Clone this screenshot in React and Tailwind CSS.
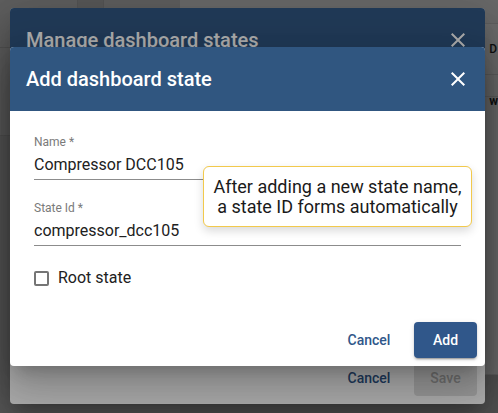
// Close icon (material style cross)
function CloseIcon({ className }) {
  return (
    <svg className={className} viewBox="0 0 24 24" fill="currentColor" width="24" height="24">
      <path d="M19 6.41L17.59 5 12 10.59 6.41 5 5 6.41 10.59 12 5 17.59 6.41 19 12 13.41 17.59 19 19 17.59 13.41 12z" />
    </svg>
  );
}

// Page behind the dialogs
function BackgroundPage() {
  return (
    <div className="absolute inset-0 flex bg-[#8c8c8c]">
      <div className="w-[180px] h-full flex flex-col">
        <div className="h-[48px] border-b border-[#7c7c7c] flex">
          <div className="w-[78px] border-r border-[#7c7c7c]" />
          <div className="w-[26px] border-r border-[#7c7c7c] bg-[#828282]" />
        </div>
        <div className="h-[88px] border-b border-[#7c7c7c]" />
        <div className="flex-1 bg-[#848484]" />
      </div>
      <div className="flex-1 h-full flex flex-col bg-[#a2a2a2]">
        <div className="h-[24px] bg-[#9c9c9c] border-b border-[#909090]" />
        <div className="h-[51px] border-b border-[#909090] flex justify-end items-center pr-[1px]">
          <span className="text-[12px] font-medium text-[#1a1a1a]">D</span>
        </div>
        <div className="h-[22px] border-b border-[#909090]" />
        <div className="h-[12px] flex justify-end items-center">
          <span className="text-[12px] font-bold text-[#1a1a1a] -mt-[4px]">w</span>
        </div>
        <div className="flex-1 border-b border-[#909090]" />
        <div className="h-[38px] bg-[#7c7c7c]" />
      </div>
    </div>
  );
}

export default function App() {
  return (
    <div className="relative w-[498px] h-[413px] overflow-hidden font-['Roboto',sans-serif]">
      <BackgroundPage />

      {/* Manage dashboard states dialog (behind) */}
      <div className="absolute left-[10px] top-[8px] w-[475px] h-[396px] rounded-[4px] bg-white flex flex-col overflow-hidden shadow-[0_11px_15px_-7px_rgba(0,0,0,0.2),0_24px_38px_3px_rgba(0,0,0,0.14),0_9px_46px_8px_rgba(0,0,0,0.12)]">
        <div className="h-[64px] shrink-0 bg-[#305680] pl-4 pr-[15px] flex items-center justify-between">
          <span className="text-[20px] font-medium text-white">Manage dashboard states</span>
          <CloseIcon className="text-white" />
        </div>
        <div className="flex-1" />
        <div className="flex justify-end items-center gap-[13px] p-2">
          <button className="w-[64px] h-[36px] text-[14px] font-medium text-[#30578a]">Cancel</button>
          <button className="w-[63px] h-[36px] rounded-[4px] bg-[#e0e0e0] text-[14px] font-medium text-[#a6a6a6]">Save</button>
        </div>
      </div>

      {/* backdrop of the second dialog */}
      <div className="absolute inset-0 bg-black/[0.33]" />

      {/* Add dashboard state dialog */}
      <div className="absolute left-[10px] top-[47px] w-[475px] h-[319px] rounded-[4px] bg-white flex flex-col shadow-[0_11px_15px_-7px_rgba(0,0,0,0.2),0_24px_38px_3px_rgba(0,0,0,0.14),0_9px_46px_8px_rgba(0,0,0,0.12)]">
        <div className="h-[64px] shrink-0 bg-[#305680] rounded-t-[4px] pl-4 pr-[15px] flex items-center justify-between">
          <span className="text-[20px] font-medium text-white">Add dashboard state</span>
          <CloseIcon className="text-white" />
        </div>

        <div className="flex-1 flex flex-col px-6 pt-[23px]">
          <div className="flex flex-col">
            <label className="text-[12px] leading-4 text-[#7a7a7a]">Name *</label>
            <div className="h-[30px] flex items-center border-b border-[#8c8c8c] text-[16px] text-[#212121]">
              Compressor DCC105
            </div>
          </div>
          <div className="flex flex-col mt-[20px]">
            <label className="text-[12px] leading-4 text-[#7a7a7a]">State Id *</label>
            <div className="h-[30px] flex items-center border-b border-[#8c8c8c] text-[16px] text-[#212121]">
              compressor_dcc105
            </div>
          </div>
          <div className="flex items-center gap-[9px] mt-[20px]">
            <span className="w-[15px] h-[15px] border-2 border-[#757575] rounded-[2px]" />
            <span className="text-[16px] leading-6 text-[#212121]">Root state</span>
          </div>
        </div>

        <div className="flex justify-end items-center gap-[13px] p-2">
          <button className="w-[64px] h-[36px] text-[14px] font-medium text-[#30578a]">Cancel</button>
          <button className="w-[63px] h-[36px] rounded-[4px] bg-[#30578a] text-[14px] font-medium text-white shadow-[0_3px_1px_-2px_rgba(0,0,0,0.2),0_2px_2px_0_rgba(0,0,0,0.14),0_1px_5px_0_rgba(0,0,0,0.12)]">
            Add
          </button>
        </div>

        {/* hint bubble */}
        <div className="absolute left-[193px] top-[119px] w-[269px] h-[61px] rounded-[6px] border border-[#f2c94c] bg-white flex flex-col items-center justify-center text-[18px] leading-[20px] text-[#1a1a1a] shadow-[0_4px_10px_rgba(0,0,0,0.15)]">
          <span>After adding a new state name,</span>
          <span>a state ID forms automatically</span>
        </div>
      </div>
    </div>
  );
}
